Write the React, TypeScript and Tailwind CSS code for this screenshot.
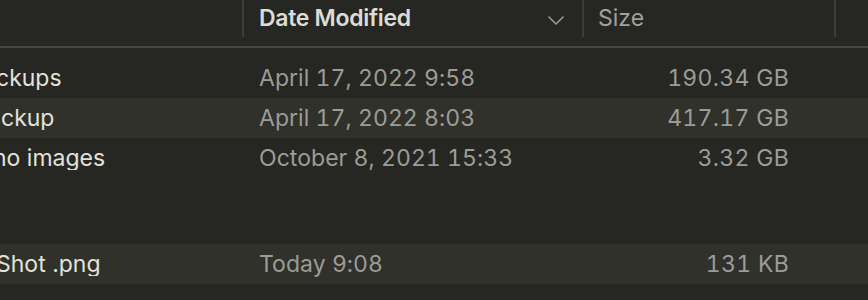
import React from "react";

type Row = { name: string; nameMl: string; date: string; size: string; striped: boolean };

const rows: Row[] = [
  { name: "ckups", nameMl: "-ml-[4px]", date: "April 17, 2022 9:58", size: "190.34 GB", striped: false },
  { name: "ckup", nameMl: "ml-[1px]", date: "April 17, 2022 8:03", size: "417.17 GB", striped: true },
  { name: "no images", nameMl: "-ml-[7px]", date: "October 8, 2021 15:33", size: "3.32 GB", striped: false },
];

function DataRow({ r }: { r: Row }) {
  return (
    <div className={`flex h-[40px] items-center ${r.striped ? "bg-[#30312b]" : ""}`}>
      <div className="w-[244px] overflow-hidden whitespace-nowrap text-[#e2e2dd]">
        <span className={`inline-block ${r.nameMl}`}>{r.name}</span>
      </div>
      <div className="w-[340px] pl-[15px] whitespace-nowrap text-[#9c9c97] tabular-nums tracking-[0.05px]">{r.date}</div>
      <div className="w-[205px] text-right whitespace-nowrap text-[#9c9c97] tabular-nums tracking-[0.3px]">{r.size}</div>
    </div>
  );
}

export default function App() {
  return (
    <div
      className="w-[868px] h-[300px] overflow-hidden bg-[#262722] text-[23px] leading-none"
      style={{ fontFamily: "Inter, 'Liberation Sans', sans-serif" }}
    >
      <div className="flex h-[46px]">
        <div className="w-[242px] h-[37px]" />
        <div className="w-[340px] h-[37px] border-l-2 border-[#3c3d37] flex items-center pl-[15px] pr-[18px]">
          <span className="font-semibold text-[#dcdcd7] flex-1 tracking-[-0.3px]">Date Modified</span>
          <svg width="16" height="9" viewBox="0 0 16 9" className="mt-[3px]">
            <path d="M1 1 L8 8 L15 1" fill="none" stroke="#9a9a95" strokeWidth="1.6" strokeLinecap="round" strokeLinejoin="round" />
          </svg>
        </div>
        <div className="w-[252px] h-[37px] border-l-2 border-[#3c3d37] flex items-center pl-[14px]">
          <span className="text-[#a0a09b]">Size</span>
        </div>
        <div className="flex-1 h-[37px] border-l-2 border-[#3c3d37]" />
      </div>
      <div className="h-[2px] bg-[#464741]" />
      <div className="h-[10px]" />
      {rows.map((r) => (
        <DataRow key={r.date} r={r} />
      ))}
      <div className="h-[66px]" />
      <DataRow r={{ name: "Shot .png", nameMl: "-ml-[4px]", date: "Today 9:08", size: "131 KB", striped: true }} />
    </div>
  );
}
